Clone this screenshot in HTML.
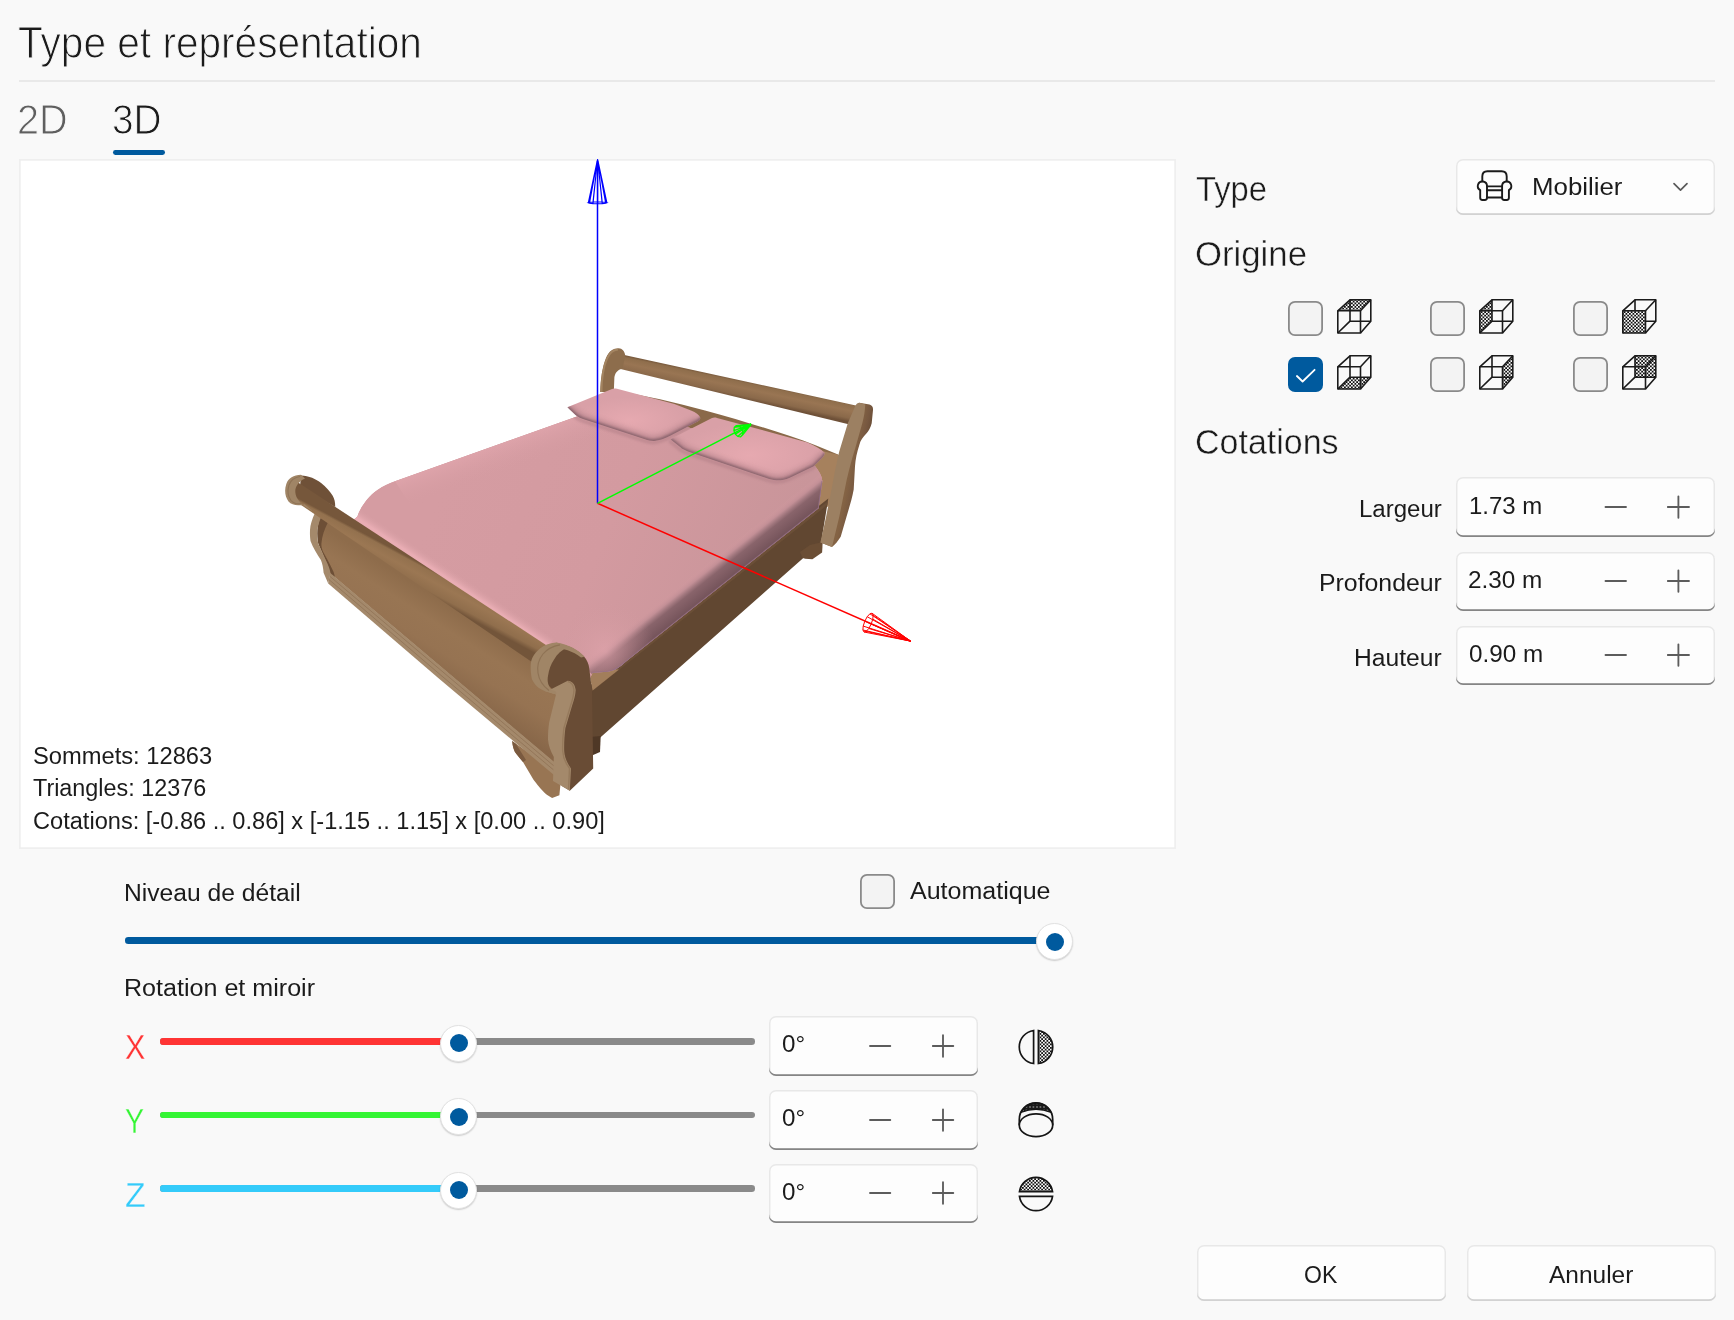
<!DOCTYPE html>
<html lang="fr"><head><meta charset="utf-8"><title>Type et représentation</title>
<style>
html,body{margin:0;padding:0}
body{width:1734px;height:1320px;background:#f9f9f9;position:relative;overflow:hidden;font-family:"Liberation Sans",sans-serif}
.t{position:absolute;white-space:nowrap;line-height:normal;transform-origin:0 0;font-family:"Liberation Sans",sans-serif}
.abs{position:absolute}
.box{position:absolute;box-sizing:border-box;background:#fdfdfd;border-radius:7px;box-shadow:inset 0 0 0 1.5px #e8e8e8}
.nb{box-shadow:inset 0 -1.8px 0 0 #858585,inset 0 0 0 1.5px #e8e8e8}
.btn{box-shadow:inset 0 -1.8px 0 0 #d2d2d2,inset 0 0 0 1.5px #e8e8e8}
.cb{position:absolute;box-sizing:border-box;width:35px;height:35px;border-radius:7px;background:#f3f3f3;box-shadow:inset 0 0 0 1.8px #8a8a8a}
.cbc{position:absolute;box-sizing:border-box;width:35px;height:35px;border-radius:7px;background:#005a9e}
.trk{position:absolute;height:6.6px;border-radius:3.3px}
.th{position:absolute;box-sizing:border-box;width:37px;height:37px;border-radius:50%;background:#fff;border:1px solid #e2e2e2;box-shadow:0 1px 1.5px rgba(0,0,0,.18)}
.th i{position:absolute;left:8.5px;top:8.5px;width:18px;height:18px;border-radius:50%;background:#005a9e}
svg{position:absolute;overflow:visible}

</style></head><body>
<div class="abs" style="left:19px;top:80px;width:1696px;height:2px;background:#e9e9e9"></div>
<div class="abs" style="left:113px;top:150px;width:52px;height:4.8px;border-radius:2.4px;background:#005a9e"></div>

<div class="abs" style="left:19px;top:159px;width:1157px;height:690px;background:#fff;box-shadow:inset 0 0 0 1.75px #efefef"></div>

<svg style="left:21px;top:161px" width="1153" height="686" viewBox="21 161 1153 686">
<defs>
<linearGradient id="gRail" gradientUnits="userSpaceOnUse" x1="740" y1="380" x2="736.2" y2="398"><stop offset="0" stop-color="#7a5b3e"/><stop offset=".1" stop-color="#8f6e4c"/><stop offset=".4" stop-color="#997553"/><stop offset=".8" stop-color="#8a694a"/><stop offset="1" stop-color="#6f5138"/></linearGradient>
<linearGradient id="gCyl" gradientUnits="userSpaceOnUse" x1="430" y1="568.5" x2="418" y2="591"><stop offset="0" stop-color="#76573b"/><stop offset=".09" stop-color="#93714e"/><stop offset=".4" stop-color="#9b7753"/><stop offset=".8" stop-color="#906e4c"/><stop offset="1" stop-color="#73553a"/></linearGradient>
<linearGradient id="gPanel" gradientUnits="userSpaceOnUse" x1="436" y1="598" x2="398" y2="658"><stop offset="0" stop-color="#8e6c4b"/><stop offset=".3" stop-color="#987553"/><stop offset=".6" stop-color="#967352"/><stop offset="1" stop-color="#886749"/></linearGradient>
<linearGradient id="gSide" gradientUnits="userSpaceOnUse" x1="720" y1="586.4" x2="703.8" y2="566.1"><stop offset="0" stop-color="#74535a"/><stop offset=".5" stop-color="#89646b"/><stop offset=".62" stop-color="#a1777e"/><stop offset=".76" stop-color="#c28f96"/><stop offset="1" stop-color="#d39aa0" stop-opacity="0"/></linearGradient>
<linearGradient id="gTopEdge" gradientUnits="userSpaceOnUse" x1="486" y1="448.8" x2="496" y2="477"><stop offset="0" stop-color="#ebaeb6"/><stop offset="1" stop-color="#d39aa0" stop-opacity="0"/></linearGradient>
<linearGradient id="gCorner" gradientUnits="userSpaceOnUse" x1="440" y1="573" x2="445" y2="565.5"><stop offset="0" stop-color="#e9adb4"/><stop offset="1" stop-color="#d9a0a6" stop-opacity="0"/></linearGradient>
<radialGradient id="gCorner2" gradientUnits="userSpaceOnUse" cx="606" cy="652" r="50"><stop offset="0" stop-color="#e3a6ae"/><stop offset="1" stop-color="#d39aa0" stop-opacity="0"/></radialGradient>
<radialGradient id="gPil1" gradientUnits="userSpaceOnUse" cx="630" cy="420" r="55" gradientTransform="translate(630 420) scale(1 .42) translate(-630 -420)"><stop offset="0" stop-color="#e6a9b0"/><stop offset="1" stop-color="#d9a0a7"/></radialGradient>
<radialGradient id="gPil2" gradientUnits="userSpaceOnUse" cx="750" cy="455" r="75" gradientTransform="translate(750 455) scale(1 .42) translate(-750 -455)"><stop offset="0" stop-color="#e6a9b0"/><stop offset="1" stop-color="#d9a0a7"/></radialGradient>
<linearGradient id="gMatX" gradientUnits="userSpaceOnUse" x1="450" y1="470" x2="760" y2="600"><stop offset="0" stop-color="#d59ca2"/><stop offset=".5" stop-color="#d39aa0"/><stop offset="1" stop-color="#c9959a"/></linearGradient>
<linearGradient id="gPostR" gradientUnits="userSpaceOnUse" x1="858" y1="430" x2="873" y2="433"><stop offset="0" stop-color="#846344"/><stop offset=".5" stop-color="#775840"/><stop offset="1" stop-color="#644932"/></linearGradient>
<clipPath id="cMat"><path d="M350,523L357.5,516.5C360,508 367.5,497 377.5,490C383,486 389,483.5 395,481.3L612,404L815,466C819,471 822,476 822.3,481L818.6,508.2L627.5,660.3C621,666 615,671.3 607,671.8L592.5,672.8L585,690L545,656Z"/></clipPath>
<clipPath id="cP1"><path d="M567.4,407.2 L612,389 C613.6,388.3 615.2,388.2 617,388.8 L674.4,404 L691,410.4 C696,412.5 699,414.8 700.2,417.4 C700.5,419 699.5,420.3 697.5,421.5 L670.7,435.4 C665,438.5 659.5,440.3 654.1,440.9 C651,441 648,440.2 645,439.2 L583,419 C578,417.3 576,415.5 574,413.5Z"/></clipPath>
<clipPath id="cP2"><path d="M670.4,439.3 L711.5,418.3 C713.2,417.4 715,417.3 717,417.9 L807.5,442.4 C815,445.5 821,449 824.6,452.8 C825,455 823,457.5 820,460 L813.7,466.3 L789.8,477.7 C785,479.8 780.5,480.6 776.3,480.3 C773,480.1 770,479.2 767,478.2 L688,451.5 C684,450 682,448.8 680.8,447.6Z"/></clipPath>
<filter id="b1" x="-20%" y="-20%" width="140%" height="140%"><feGaussianBlur stdDeviation="1.3"/></filter><filter id="b2" x="-20%" y="-20%" width="140%" height="140%"><feGaussianBlur stdDeviation="2.5"/></filter>
</defs>
<path d="M612,390 C645,395.5 676,402.5 705,410.5 C736,419 764,427.5 790,436 C808,442 824,448.5 838,454.5 L832,472 L612,406Z" fill="#8a6949"/>
<polygon points="800.0,446.0 842.0,455.5 832.0,504.0 800.0,524.0" fill="#a6815d"/>
<polygon points="622.0,354.6 857.0,405.7 848.5,424.2 620.5,369.0" fill="url(#gRail)"/>
<path d="M600.2,392 C600.5,380 602,368 606,358 C609,351 613,348.4 618.8,348.3 C622,348.5 624.7,351 625.2,355.5 L622.6,368.8 C618.5,369.2 615.5,372 614.4,377 L613.8,392Z" fill="#8d6d4c"/>
<path d="M601.4,392 C601.6,380 603,368 607,358.7 C609.7,352.2 613.2,349.6 618,349.4" fill="none" stroke="#a38461" stroke-width="2"/>
<polygon points="575.0,695.0 592.5,683.5 828.3,498.5 821.0,543.3 805.0,556.5 600.0,737.7 580.0,756.0" fill="#614731"/>
<polygon points="592.5,686.0 828.0,501.0 827.3,505.0 592.5,691.0" fill="#6b4f37"/>
<polygon points="800.0,552.0 802.7,557.9 805.2,558.7 812.4,559.3 822.1,552.4 822.7,542.0 810.0,545.0" fill="#6b4e35"/>
<polygon points="590.0,737.0 600.7,736.0 600.0,752.0 592.0,755.5" fill="#4f3826"/>
<polygon points="588.0,668.0 592.6,690.5 619.0,669.5" fill="#a27e5b"/>
<path d="M859.4,402.7 L869.5,404.5 C872,405.5 873.3,407 873,410 L871.7,423.2 C870.5,428 868.5,431 866.6,433.2 C863,437 860.5,440 859.4,444.7 C857,452 855.5,459 855,466.3 L853.7,489.4 C852,499 849,508 846.5,516.7 L840.7,536.8 C838,541 835,545 832,547 L820.6,542.6 Z" fill="url(#gPostR)"/>
<path d="M855,406.6 C856,404 857.5,402.9 859.4,402.7 L865.2,404.5 C865,411 864,417 862.3,423.2 L855,449 C851.5,460 849,470 846.5,480.7 L839.3,516.7 L832,547 L820.4,542.6 L826.1,516.7 L831.8,488 C833.8,476 836.3,464 839.1,452 L847.8,423.2 Z" fill="#9c8062"/>
<path d="M350,523L357.5,516.5C360,508 367.5,497 377.5,490C383,486 389,483.5 395,481.3L612,404L815,466C819,471 822,476 822.3,481L818.6,508.2L627.5,660.3C621,666 615,671.3 607,671.8L592.5,672.8L585,690L545,656Z" fill="#d39aa0"/>
<g clip-path="url(#cMat)">
<rect x="340" y="400" width="500" height="300" fill="url(#gMatX)"/>
<polygon points="395.0,481.3 612.0,404.0 640.0,440.0 420.0,520.0" fill="url(#gTopEdge)" opacity=".4"/>
<polygon points="352.0,508.0 366.0,494.0 560.0,625.0 545.0,656.0 350.0,523.0" fill="url(#gCorner)"/>
<polygon points="840.0,492.0 600.0,683.0 560.0,640.0 810.0,440.0" fill="url(#gSide)"/>
<circle cx="606" cy="652" r="50" fill="url(#gCorner2)" opacity=".6"/>
<path d="M822.3,481L818.6,508.2L627.5,660.3C621,666 615,671.3 607,671.8L592.5,672.8" fill="none" stroke="#94708a" stroke-width="1.6" opacity=".8"/>
<path d="M567.4,407.2 L574,413.5 C576,415.5 578,417.3 583,419 L645,439.2 C648,440.2 651,441 654.1,440.9 C659.5,440.3 665,438.5 670.7,435.4 L697.5,421.5 C699.5,420.3 700.5,419 700.2,417.4" fill="none" stroke="#b07e86" stroke-width="4" opacity=".5" transform="translate(-1 1.5)" filter="url(#b1)"/>
<path d="M670.4,439.3 L680.8,447.6 C682,448.8 684,450 688,451.5 L767,478.2 C770,479.2 773,480.1 776.3,480.3 C780.5,480.6 785,479.8 789.8,477.7 L813.7,466.3 L820,460 C823,457.5 825,455 824.6,452.8" fill="none" stroke="#b07e86" stroke-width="4" opacity=".5" transform="translate(-1 1.5)" filter="url(#b1)"/>
</g>
<path d="M567.4,407.2 L612,389 C613.6,388.3 615.2,388.2 617,388.8 L674.4,404 L691,410.4 C696,412.5 699,414.8 700.2,417.4 C700.5,419 699.5,420.3 697.5,421.5 L670.7,435.4 C665,438.5 659.5,440.3 654.1,440.9 C651,441 648,440.2 645,439.2 L583,419 C578,417.3 576,415.5 574,413.5Z" fill="url(#gPil1)"/>
<g clip-path="url(#cP1)"><path d="M567.4,407.2 L574,413.5 C576,415.5 578,417.3 583,419 L645,439.2 C648,440.2 651,441 654.1,440.9 C659.5,440.3 665,438.5 670.7,435.4 L697.5,421.5 C699.5,420.3 700.5,419 700.2,417.4" fill="none" stroke="#a0727b" stroke-width="9" opacity=".55" filter="url(#b2)"/><path d="M567.4,407.2 L574,413.5 C576,415.5 578,417.3 583,419 L645,439.2 C648,440.2 651,441 654.1,440.9 C659.5,440.3 665,438.5 670.7,435.4 L697.5,421.5 C699.5,420.3 700.5,419 700.2,417.4" fill="none" stroke="#7d5a63" stroke-width="3.2" opacity=".8" filter="url(#b1)"/></g>
<path d="M670.4,439.3 L711.5,418.3 C713.2,417.4 715,417.3 717,417.9 L807.5,442.4 C815,445.5 821,449 824.6,452.8 C825,455 823,457.5 820,460 L813.7,466.3 L789.8,477.7 C785,479.8 780.5,480.6 776.3,480.3 C773,480.1 770,479.2 767,478.2 L688,451.5 C684,450 682,448.8 680.8,447.6Z" fill="url(#gPil2)"/>
<g clip-path="url(#cP2)"><path d="M670.4,439.3 L680.8,447.6 C682,448.8 684,450 688,451.5 L767,478.2 C770,479.2 773,480.1 776.3,480.3 C780.5,480.6 785,479.8 789.8,477.7 L813.7,466.3 L820,460 C823,457.5 825,455 824.6,452.8" fill="none" stroke="#a0727b" stroke-width="9" opacity=".55" filter="url(#b2)"/><path d="M670.4,439.3 L680.8,447.6 C682,448.8 684,450 688,451.5 L767,478.2 C770,479.2 773,480.1 776.3,480.3 C780.5,480.6 785,479.8 789.8,477.7 L813.7,466.3 L820,460 C823,457.5 825,455 824.6,452.8" fill="none" stroke="#7d5a63" stroke-width="3.2" opacity=".8" filter="url(#b1)"/></g>
<polygon points="318.0,506.0 543.0,656.0 558.0,700.0 558.0,766.0 330.0,573.2 319.0,545.0" fill="url(#gPanel)"/>
<path d="M321.4,514 C319,521 317.5,526 317.3,530 C317,534.5 317.4,539 318.2,543.6 L327.3,563.6 L330.5,574.5 L335,577 L333.6,572 C330,564 326,557 322.7,551 C321.6,548 321.3,546 321.4,543.6 C322,536 324.5,529 328.2,521.8 L329,517Z" fill="#6d4f36"/>
<path d="M512.2,741 L556,772 L560.5,783.8 L559.4,795.3 L552.1,797.9 C548,796 545,793.5 543.8,792.1 C539,787 536,783 533.5,779.7 L523,762 C519,757 516.5,754 514.8,751.7 C513.5,749 512.6,746 512.2,741Z" fill="#987553"/>
<path d="M512.2,741 C512.6,746 513.5,749 514.8,751.7 C516.5,754 519,757 523,762 L526,760 L516,744Z" fill="#7a5a3f"/>
<polygon points="330.0,572.7 556.0,763.5 556.0,776.7 440.0,679.5 328.2,583.6" fill="#a4896b"/>
<path d="M329.5,576L440,669.5L556,767.7M329,579.6L440,674.5L556,772" stroke="#927558" stroke-width="0.9" fill="none"/>
<path d="M315,512.7 C312,519 310.3,525 310,530 C309.8,534 310,537.5 310.5,540.9 C313,547.5 317,554 320.9,560 C322.5,564 323.2,568 323.6,572.7 L328.2,583.6 L330.5,573 C329.8,569.5 328.8,566.5 327.3,563.6 L318.2,543.6 C317.4,539 317,534.5 317.3,530 C318,525 319.5,520.5 321.4,516.4Z" fill="#a4896b"/>
<path d="M301,475.5 C309,475.8 316,479 321.1,483.1 C326,487 330,491.5 332.7,495.8 C334.5,499 335.3,502.5 335.2,507 L300,487Z" fill="#6f5138"/>
<polygon points="295.0,480.5 546.0,645.0 540.0,667.5 294.0,500.2" fill="url(#gCyl)"/>
<path d="M301,474.8 C293.5,475.2 288.5,478 286.3,484 C284.2,490 285,497 288.5,501.5 C292,505.3 298,506.5 304.5,504.2 L313,511 C306,508 300,503.5 297,498 C294.6,493 295,489 296.6,486 C298.5,482.5 301.5,480 305,478.6 Z" fill="#a08566"/>
<path d="M300,476.5 C294,477.5 290.5,480.5 288.8,485.5 C287.3,491 288,496.5 291,500.5 C293.5,503.3 297.5,504.3 301.5,503.5" fill="none" stroke="#8f7355" stroke-width="1.1"/>
<path d="M552,645 C560,643.5 568,645.5 572.3,648 C577,650.5 581,653.5 583.8,656.3 C587,660 588.8,664 589.2,668 L592,690 L593.2,768.6 L569.8,790.8 L562,786 L560,757 L557,740 L558,722 L563,700 L553,689.5 C548,686 545,681 545.5,675 C546,669 548,664 551,659.5 C553,655 555,650 552,645Z" fill="#694c35"/>
<path d="M567.7,680.7 C572,681 575,684 575.7,690 C575.5,695 574,700 572.3,705 L565.4,728 C564.5,735 564,743 564.2,751 C564.5,757 567,763 571,768.4 L569.8,790.8 L557.3,783.5 L553,781 L553.8,756.9 C550.5,751 548.5,746 548,739.6 C548,733 548.3,728 549.2,722.3 L556,694.6 L544.6,691 L551.5,689Z" fill="#a4896b"/>
<path d="M567.7,681.5 C571,682 573.5,685 574,690 C573.8,695 572.5,700 570.8,705 L563.9,728 C563,735 562.5,743 562.7,751 C563,757 565.5,763 569.5,768.4 L568.6,789" fill="none" stroke="#967a5c" stroke-width="1.4"/>
<path d="M556,642.5 C549,643 544,645 540,648.5 C534,653.5 531,659 530.7,664.6 C530.4,670 531,675 532,679.6 C535,685.5 539,689 544.6,691 L556,694.6 C557,692 556,691 551.5,690 C548,686 547,681 548,676.1 C549,669 551,664 553.8,660 C557,654 562,650 567.7,647.3 C564,645 560,643.5 556,642.5Z" fill="#a08566"/>
<path d="M556,642.5 C562,643.3 568,645.2 572.3,647.6 C577,650 581,653 584.5,656.8 L581,657.5 C577,654.5 572.5,652 567.7,650.3 C564,649 560,648.3 556,648Z" fill="#a08566"/>
<path d="M560,644.8 C553,646 547,649 543,654 C538.5,659.5 537,666 538,673 C539,680 543,686 549,690.5" fill="none" stroke="#8f7355" stroke-width="1.2"/>
</svg>
<svg style="left:21px;top:161px" width="1153" height="686" viewBox="21 161 1153 686" fill="none" stroke-width="1.5" stroke-linecap="butt">
<line x1="597.5" y1="161" x2="597.5" y2="503.3" stroke="#0000ff"/>
<line x1="597.5" y1="503.3" x2="909.8" y2="640.8" stroke="#ff0000"/>
<line x1="597.5" y1="503.3" x2="750.6" y2="424.7" stroke="#00ff00"/>
<path d="M606.9,202.8 L605.7,203.2 L602.2,203.6 L597.6,203.7 L593.0,203.6 L589.5,203.2 L588.3,202.8 L589.5,202.4 L593.0,202.0 L597.6,201.9 L602.2,202.0 L605.7,202.4ZM597.6,159.0L606.9,202.8M597.6,159.0L605.7,203.2M597.6,159.0L602.2,203.6M597.6,159.0L597.6,203.7M597.6,159.0L593.0,203.6M597.6,159.0L589.5,203.2M597.6,159.0L588.3,202.8M597.6,159.0L589.5,202.4M597.6,159.0L593.0,202.0M597.6,159.0L597.6,201.9M597.6,159.0L602.2,202.0M597.6,159.0L605.7,202.4" stroke="#0000ff" stroke-width="1.1"/>
<path d="M872.0,613.2 L873.1,615.2 L872.8,619.1 L871.2,624.0 L868.8,628.5 L866.1,631.4 L864.0,632.0 L862.9,630.0 L863.2,626.1 L864.8,621.2 L867.2,616.7 L869.9,613.8ZM910.5,641.1L872.0,613.2M910.5,641.1L873.1,615.2M910.5,641.1L872.8,619.1M910.5,641.1L871.2,624.0M910.5,641.1L868.8,628.5M910.5,641.1L866.1,631.4M910.5,641.1L864.0,632.0M910.5,641.1L862.9,630.0M910.5,641.1L863.2,626.1M910.5,641.1L864.8,621.2M910.5,641.1L867.2,616.7M910.5,641.1L869.9,613.8" stroke="#ff0000" stroke-width="1.0"/>
<path d="M740.6,436.8 L737.8,436.4 L735.3,434.1 L733.9,430.6 L734.3,427.4 L736.2,425.6 L739.0,426.0 L741.5,428.3 L742.9,431.8 L742.5,435.0ZM751.2,424.3L740.6,436.8M751.2,424.3L737.8,436.4M751.2,424.3L735.3,434.1M751.2,424.3L733.9,430.6M751.2,424.3L734.3,427.4M751.2,424.3L736.2,425.6M751.2,424.3L739.0,426.0M751.2,424.3L741.5,428.3M751.2,424.3L742.9,431.8M751.2,424.3L742.5,435.0" stroke="#00ff00" stroke-width="1.3"/>
</svg>
<svg style="left:0;top:0" width="0" height="0"><defs>
<pattern id="dots" width="3.5" height="3.5" patternUnits="userSpaceOnUse"><rect width="3.5" height="3.5" fill="#fbfbfb"/><rect x="0" y="0" width="1.75" height="1.75" fill="#111"/><rect x="1.75" y="1.75" width="1.75" height="1.75" fill="#111"/></pattern>
<pattern id="dots2" width="3.5" height="3.5" patternUnits="userSpaceOnUse"><rect width="3.5" height="3.5" fill="#1a1a1a"/><rect x="0.4" y="0.4" width="1.1" height="1.1" fill="#eee"/></pattern>
</defs></svg>
<div class="box btn" style="left:1456.2px;top:159px;width:258.5px;height:55.6px"></div>
<svg style="left:1465px;top:160px" width="60" height="50" viewBox="0 0 60 50" fill="none" stroke="#1b1b1b" stroke-width="1.9" stroke-linejoin="round" stroke-linecap="round">
<path d="M17.3,21.2V16.5Q17.3,11.2 22.4,11.2H36.6Q41.7,11.2 41.7,16.5V21.2"/>
<path d="M22,26.1A4.6,4.6 0 1 0 15.2,30.1V37.8Q15.2,40 17.4,40H19.8Q22,40 22,37.8Z"/>
<path d="M37.1,26.1A4.6,4.6 0 1 1 43.9,30.1V37.8Q43.9,40 41.7,40H39.3Q37.1,40 37.1,37.8Z"/>
<path d="M22,26.4H37.1M22,30.3H37.1M22,37.5H37.1"/>
</svg>
<svg style="left:1670px;top:180px" width="22" height="14" viewBox="1670 180 22 14" fill="none" stroke="#5a5a5a" stroke-width="1.7" stroke-linecap="round" stroke-linejoin="round"><path d="M1674,183.7L1680.5,190.2L1687,183.7"/></svg>
<div class="cb" style="left:1288px;top:300.8px"></div>
<div class="cb" style="left:1430.3px;top:300.8px"></div>
<div class="cb" style="left:1573px;top:300.8px"></div>
<div class="cbc" style="left:1288px;top:356.9px"></div>
<svg style="left:1288px;top:356.9px" width="35" height="35" viewBox="0 0 35 35" fill="none" stroke="#fff" stroke-width="1.8" stroke-linecap="round" stroke-linejoin="round"><path d="M8.9,19L14.6,24.5L26.6,12.8"/></svg>
<div class="cb" style="left:1430.3px;top:356.9px"></div>
<div class="cb" style="left:1573px;top:356.9px"></div>
<svg style="left:1337.3px;top:299.3px" width="35" height="35" viewBox="0 0 35 35" fill="none" stroke="#1b1b1b" stroke-width="1.6" stroke-linejoin="round"><polygon points="0.8,11.8 23.5,11.8 33.8,0.8 13.0,0.8" fill="url(#dots)" stroke="none"/><rect x="13.0" y="0.8" width="20.799999999999997" height="21.4"/><rect x="0.8" y="11.8" width="22.7" height="22.2"/><path d="M0.8,11.8L13.0,0.8M23.5,11.8L33.8,0.8M0.8,34.0L13.0,22.2M23.5,34.0L33.8,22.2"/></svg>
<svg style="left:1479.4px;top:299.3px" width="35" height="35" viewBox="0 0 35 35" fill="none" stroke="#1b1b1b" stroke-width="1.6" stroke-linejoin="round"><polygon points="0.8,11.8 13.0,0.8 13.0,22.2 0.8,34.0" fill="url(#dots)" stroke="none"/><rect x="13.0" y="0.8" width="20.799999999999997" height="21.4"/><rect x="0.8" y="11.8" width="22.7" height="22.2"/><path d="M0.8,11.8L13.0,0.8M23.5,11.8L33.8,0.8M0.8,34.0L13.0,22.2M23.5,34.0L33.8,22.2"/></svg>
<svg style="left:1621.8px;top:299.3px" width="35" height="35" viewBox="0 0 35 35" fill="none" stroke="#1b1b1b" stroke-width="1.6" stroke-linejoin="round"><rect x="13.0" y="0.8" width="20.799999999999997" height="21.4"/><path d="M0.8,11.8L13.0,0.8M23.5,11.8L33.8,0.8M0.8,34.0L13.0,22.2M23.5,34.0L33.8,22.2"/><polygon points="0.8,11.8 23.5,11.8 23.5,34.0 0.8,34.0" fill="url(#dots)" stroke="none"/><rect x="0.8" y="11.8" width="22.7" height="22.2"/></svg>
<svg style="left:1337.3px;top:355.4px" width="35" height="35" viewBox="0 0 35 35" fill="none" stroke="#1b1b1b" stroke-width="1.6" stroke-linejoin="round"><polygon points="0.8,34.0 23.5,34.0 33.8,22.2 13.0,22.2" fill="url(#dots)" stroke="none"/><rect x="13.0" y="0.8" width="20.799999999999997" height="21.4"/><rect x="0.8" y="11.8" width="22.7" height="22.2"/><path d="M0.8,11.8L13.0,0.8M23.5,11.8L33.8,0.8M0.8,34.0L13.0,22.2M23.5,34.0L33.8,22.2"/></svg>
<svg style="left:1479.4px;top:355.4px" width="35" height="35" viewBox="0 0 35 35" fill="none" stroke="#1b1b1b" stroke-width="1.6" stroke-linejoin="round"><polygon points="23.5,11.8 33.8,0.8 33.8,22.2 23.5,34.0" fill="url(#dots)" stroke="none"/><rect x="13.0" y="0.8" width="20.799999999999997" height="21.4"/><rect x="0.8" y="11.8" width="22.7" height="22.2"/><path d="M0.8,11.8L13.0,0.8M23.5,11.8L33.8,0.8M0.8,34.0L13.0,22.2M23.5,34.0L33.8,22.2"/></svg>
<svg style="left:1621.8px;top:355.4px" width="35" height="35" viewBox="0 0 35 35" fill="none" stroke="#1b1b1b" stroke-width="1.6" stroke-linejoin="round"><polygon points="13.0,0.8 33.8,0.8 33.8,22.2 13.0,22.2" fill="url(#dots)" stroke="none"/><rect x="13.0" y="0.8" width="20.799999999999997" height="21.4"/><rect x="0.8" y="11.8" width="22.7" height="22.2"/><path d="M0.8,11.8L13.0,0.8M23.5,11.8L33.8,0.8M0.8,34.0L13.0,22.2M23.5,34.0L33.8,22.2"/></svg>
<div class="box nb" style="left:1456.2px;top:477.3px;width:258.4px;height:59.5px"></div>
<svg style="left:1600px;top:491.5px" width="100" height="30" viewBox="1600 491.5 100 30" fill="none" stroke="#5c5c5c" stroke-width="1.85" stroke-linecap="round"><path d="M1605.5,506.5H1626M1667.8,506.5H1689M1678.4,495.8V517.2"/></svg>
<div class="box nb" style="left:1456.2px;top:551.5px;width:258.4px;height:59.5px"></div>
<svg style="left:1600px;top:565.7px" width="100" height="30" viewBox="1600 565.7 100 30" fill="none" stroke="#5c5c5c" stroke-width="1.85" stroke-linecap="round"><path d="M1605.5,580.7H1626M1667.8,580.7H1689M1678.4,570.0V591.4000000000001"/></svg>
<div class="box nb" style="left:1456.2px;top:625.8px;width:258.4px;height:59.5px"></div>
<svg style="left:1600px;top:640.0px" width="100" height="30" viewBox="1600 640.0 100 30" fill="none" stroke="#5c5c5c" stroke-width="1.85" stroke-linecap="round"><path d="M1605.5,655.0H1626M1667.8,655.0H1689M1678.4,644.3V665.7"/></svg>
<div class="cb" style="left:860px;top:874.2px"></div>
<div class="trk" style="left:125px;top:937.1px;width:930px;background:#005a9e"></div>
<div class="th" style="left:1036.2px;top:923.1px"><i></i></div>
<div class="trk" style="left:160px;top:1038.1px;width:595px;background:#8a8a8a"></div>
<div class="trk" style="left:160px;top:1038.1px;width:300px;background:#ff3434"></div>
<div class="th" style="left:440.1px;top:1024.5px"><i></i></div>
<div class="trk" style="left:160px;top:1111.7px;width:595px;background:#8a8a8a"></div>
<div class="trk" style="left:160px;top:1111.7px;width:300px;background:#34f534"></div>
<div class="th" style="left:440.1px;top:1098.1px"><i></i></div>
<div class="trk" style="left:160px;top:1185.3px;width:595px;background:#8a8a8a"></div>
<div class="trk" style="left:160px;top:1185.3px;width:300px;background:#34cbfa"></div>
<div class="th" style="left:440.1px;top:1171.7px"><i></i></div>
<div class="box nb" style="left:769.2px;top:1016.2px;width:209.2px;height:59.5px"></div>
<svg style="left:860px;top:1030.8px" width="100" height="30" viewBox="860 1030.8 100 30" fill="none" stroke="#5c5c5c" stroke-width="1.85" stroke-linecap="round"><path d="M870,1045.8H890.3M932.8,1045.8H953.3M943,1035.1V1056.5"/></svg>
<div class="box nb" style="left:769.2px;top:1090.0px;width:209.2px;height:59.5px"></div>
<svg style="left:860px;top:1104.6px" width="100" height="30" viewBox="860 1104.6 100 30" fill="none" stroke="#5c5c5c" stroke-width="1.85" stroke-linecap="round"><path d="M870,1119.6H890.3M932.8,1119.6H953.3M943,1108.8999999999999V1130.3"/></svg>
<div class="box nb" style="left:769.2px;top:1163.7px;width:209.2px;height:59.5px"></div>
<svg style="left:860px;top:1178.3px" width="100" height="30" viewBox="860 1178.3 100 30" fill="none" stroke="#5c5c5c" stroke-width="1.85" stroke-linecap="round"><path d="M870,1193.3H890.3M932.8,1193.3H953.3M943,1182.6V1204.0"/></svg>
<svg style="left:1015.5999999999999px;top:1026.5px" width="40" height="40" viewBox="-20 -20 40 40" fill="none" stroke="#151515" stroke-width="1.7" stroke-linejoin="miter"><path d="M-2.4,-16.53A16.7,16.7 0 0 0 -2.4,16.53Z"/><path d="M2.4,-16.53A16.7,16.7 0 0 1 2.4,16.53Z" fill="url(#dots)"/></svg>
<svg style="left:1015.5999999999999px;top:1100.2px" width="40" height="40" viewBox="-20 -20 40 40" fill="none" stroke="#151515" stroke-width="1.7" stroke-linejoin="miter"><path d="M-15.2,-7.5A16.7,16.6 0 0 1 15.2,-7.5Q0,-13.7 -15.2,-7.5Z" fill="url(#dots2)" stroke-width="1.2"/><path d="M-16.7,5.2V-0.6A16.7,16.6 0 0 1 16.7,-0.6V5.2"/><ellipse cx="0" cy="5.2" rx="16.7" ry="11.4" fill="#f9f9f9"/></svg>
<svg style="left:1015.5999999999999px;top:1174.35px" width="40" height="40" viewBox="-20 -20 40 40" fill="none" stroke="#151515" stroke-width="1.7" stroke-linejoin="miter"><path d="M-16.53,-2.4A16.7,16.7 0 0 1 16.53,-2.4Z" fill="url(#dots)"/><path d="M-16.53,2.4A16.7,16.7 0 0 0 16.53,2.4Z"/></svg>
<div class="box btn" style="left:1197px;top:1244.9px;width:248.5px;height:56px"></div>
<div class="box btn" style="left:1467.2px;top:1244.9px;width:248.5px;height:56px"></div>
<span class="t" style="left:18.17px;top:17.72px;font-size:44.29px;color:#1b1b1b;-webkit-text-stroke:1.0px #f9f9f9;transform:scaleX(0.9166)">Type et représentation</span>
<span class="t" style="left:17.14px;top:95.32px;font-size:43.29px;color:#5f5f5f;-webkit-text-stroke:1.0px #f9f9f9;transform:scaleX(0.9169)">2D</span>
<span class="t" style="left:111.59px;top:95.32px;font-size:43.29px;color:#1b1b1b;-webkit-text-stroke:1.0px #f9f9f9;transform:scaleX(0.8956)">3D</span>
<span class="t" style="left:32.73px;top:741.52px;font-size:24.29px;color:#1b1b1b;transform:scaleX(0.9764)">Sommets: 12863</span>
<span class="t" style="left:33.32px;top:773.52px;font-size:24.29px;color:#1b1b1b;transform:scaleX(0.9619)">Triangles: 12376</span>
<span class="t" style="left:32.63px;top:806.52px;font-size:24.29px;color:#1b1b1b;transform:scaleX(0.9717)">Cotations: [-0.86 .. 0.86] x [-1.15 .. 1.15] x [0.00 .. 0.90]</span>
<span class="t" style="left:124.37px;top:878.77px;font-size:24.29px;color:#1b1b1b;transform:scaleX(1.0148)">Niveau de détail</span>
<span class="t" style="left:910.00px;top:877.02px;font-size:24.29px;color:#1b1b1b;transform:scaleX(1.0306)">Automatique</span>
<span class="t" style="left:124.34px;top:973.77px;font-size:24.29px;color:#1b1b1b;transform:scaleX(1.0333)">Rotation et miroir</span>
<span class="t" style="left:125.12px;top:1027.16px;font-size:35.07px;color:#ff3434;-webkit-text-stroke:0.3px #f9f9f9;transform:scaleX(0.8702)">X</span>
<span class="t" style="left:125.15px;top:1100.66px;font-size:35.07px;color:#34f534;-webkit-text-stroke:0.3px #f9f9f9;transform:scaleX(0.8145)">Y</span>
<span class="t" style="left:124.54px;top:1175.41px;font-size:35.07px;color:#34cbfa;-webkit-text-stroke:0.3px #f9f9f9;transform:scaleX(0.9657)">Z</span>
<span class="t" style="left:781.90px;top:1030.42px;font-size:24.29px;color:#1b1b1b;transform:scaleX(0.9949)">0°</span>
<span class="t" style="left:781.90px;top:1104.17px;font-size:24.29px;color:#1b1b1b;transform:scaleX(0.9949)">0°</span>
<span class="t" style="left:781.90px;top:1177.92px;font-size:24.29px;color:#1b1b1b;transform:scaleX(0.9949)">0°</span>
<span class="t" style="left:1196.26px;top:169.69px;font-size:34.57px;color:#1b1b1b;-webkit-text-stroke:0.45px #f9f9f9;transform:scaleX(0.9478)">Type</span>
<span class="t" style="left:1531.98px;top:172.52px;font-size:24.29px;color:#1b1b1b;transform:scaleX(1.0636)">Mobilier</span>
<span class="t" style="left:1194.65px;top:235.19px;font-size:34.57px;color:#1b1b1b;-webkit-text-stroke:0.45px #f9f9f9;transform:scaleX(1.0049)">Origine</span>
<span class="t" style="left:1194.68px;top:422.69px;font-size:34.57px;color:#1b1b1b;-webkit-text-stroke:0.45px #f9f9f9;transform:scaleX(0.9833)">Cotations</span>
<span class="t" style="left:1358.72px;top:494.77px;font-size:24.29px;color:#1b1b1b;transform:scaleX(0.9899)">Largeur</span>
<span class="t" style="left:1318.76px;top:568.82px;font-size:24.29px;color:#1b1b1b;transform:scaleX(1.0223)">Profondeur</span>
<span class="t" style="left:1353.97px;top:643.62px;font-size:24.29px;color:#1b1b1b;transform:scaleX(1.0141)">Hauteur</span>
<span class="t" style="left:1469.47px;top:491.52px;font-size:24.29px;color:#1b1b1b;transform:scaleX(0.9871)">1.73 m</span>
<span class="t" style="left:1468.40px;top:565.52px;font-size:24.29px;color:#1b1b1b;transform:scaleX(1.0019)">2.30 m</span>
<span class="t" style="left:1468.70px;top:639.52px;font-size:24.29px;color:#1b1b1b;transform:scaleX(0.9977)">0.90 m</span>
<span class="t" style="left:1304.46px;top:1260.52px;font-size:24.29px;color:#1b1b1b;transform:scaleX(0.9470)">OK</span>
<span class="t" style="left:1549.25px;top:1260.52px;font-size:24.29px;color:#1b1b1b;transform:scaleX(1.0082)">Annuler</span>
</body></html>
